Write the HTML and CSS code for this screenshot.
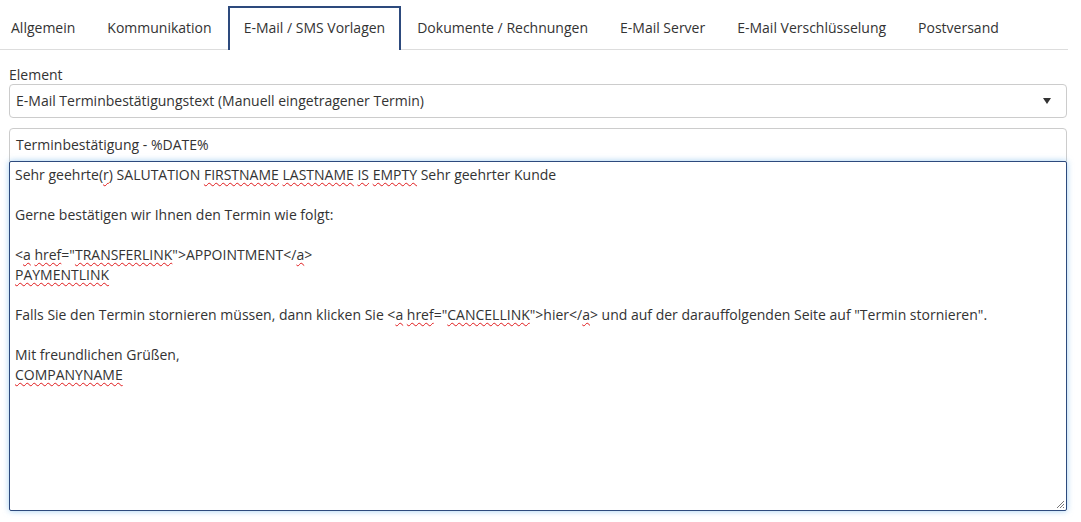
FILE: index.html
```html
<html>
  <head>
    <title>E-Mail / SMS Vorlagen</title>
    <meta charset="utf-8">
    <link rel="stylesheet" href="styles.css">
  </head>
  <body>
    <ul class="tabs">
      <li class="tab">Allgemein</li>
      <li class="tab">Kommunikation</li>
      <li class="tab active">E-Mail / SMS Vorlagen</li>
      <li class="tab">Dokumente / Rechnungen</li>
      <li class="tab">E-Mail Server</li>
      <li class="tab">E-Mail Verschlüsselung</li>
      <li class="tab">Postversand</li>
    </ul>

    <div class="form">
      <label class="label">Element</label>
      <div class="select">
        <span>E-Mail Terminbestätigungstext (Manuell eingetragener Termin)</span>
        <svg class="caret" width="8" height="6" viewBox="0 0 8 6"><path d="M0 0 H8 L4 6 z" fill="#333"/></svg>
      </div>

      <div class="input">Terminbestätigung - %DATE%</div>

      <div class="textarea"><div class="text">Sehr geehrte(<span class="typo">r</span>) SALUTATION <span class="typo">FIRSTNAME</span> <span class="typo">LASTNAME</span> <span class="typo">IS</span> <span class="typo">EMPTY</span> Sehr geehrter Kunde

Gerne bestätigen wir Ihnen den Termin wie folgt:

&lt;<span class="typo">a</span> <span class="typo">href</span>="<span class="typo">TRANSFERLINK</span>"&gt;APPOINTMENT&lt;/<span class="typo">a</span>&gt;
<span class="typo">PAYMENTLINK</span>

Falls Sie den Termin stornieren müssen, dann klicken Sie &lt;<span class="typo">a</span> <span class="typo">href</span>="<span class="typo">CANCELLINK</span>"&gt;hier&lt;/<span class="typo">a</span>&gt; und auf der darauffolgenden Seite auf "Termin stornieren".

Mit freundlichen Grüßen,
<span class="typo">COMPANYNAME</span></div>
        <svg class="grip" width="10" height="10" viewBox="0 0 10 10">
          <path d="M9 2 L2 9 M9 5 L5 9 M9 8 L8 9" stroke="#777" stroke-width="1"/>
        </svg>
      </div>
    </div>
  </body>
</html>
```

FILE: styles.css
```css
body {
  margin: 0;
  font-family: "Open Sans", "Liberation Sans", sans-serif;
  font-size: 14px;
  line-height: 20px;
  color: #333;
  background: #fff;
}

.tabs {
  display: flex;
  list-style: none;
  margin: 0 0 0 -5px;
  padding: 6px 0 0 0;
  width: 1073px;
  border-bottom: 1px solid #ddd;
}

.tab {
  padding: 10px 14px 12px 14px;
  border: 2px solid transparent;
  border-bottom: none;
  margin-bottom: -1px;
  white-space: nowrap;
}

.tab.active {
  border-color: #2d4a7d;
  background: #fff;
}

.form {
  padding: 14px 14px 0 9px;
}

.label {
  display: block;
  padding-top: 1px;
  line-height: 19px;
}

.select,
.input {
  height: 34px;
  box-sizing: border-box;
  border: 1px solid #ccc;
  border-radius: 4px;
  padding: 6px 6px 0 6px;
  display: flex;
  align-items: flex-start;
}

.select span {
  flex: 1;
}

.caret {
  margin: 7px 9px 0 0;
}

.input {
  margin-top: 10px;
  border-bottom-left-radius: 0;
  border-bottom-right-radius: 0;
}

.textarea {
  position: relative;
  height: 350px;
  box-sizing: border-box;
  border: 1px solid #2d4a7d;
  border-radius: 2px;
  margin-top: -1px;
  padding: 3px 5px;
  box-shadow: 0 0 6px rgba(102, 175, 233, 0.6);
}

.text {
  white-space: pre-wrap;
}

.typo {
  text-decoration: underline wavy #e0191b;
  text-decoration-thickness: 1px;
  text-underline-offset: 2px;
}

.grip {
  position: absolute;
  right: 1px;
  bottom: 1px;
}
```
